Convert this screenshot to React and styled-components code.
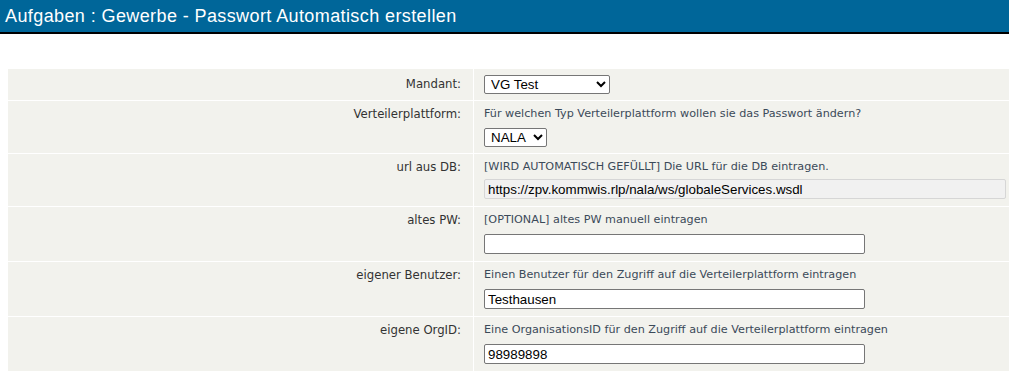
import React from "react";
import styled, { createGlobalStyle } from "styled-components";

const GlobalStyle = createGlobalStyle`
  html, body {
    margin: 0;
    padding: 0;
    background: #fff;
    overflow: hidden;
  }
  body {
    font-family: "DejaVu Sans", Verdana, sans-serif;
  }
`;

const Page = styled.div`
  width: 1009px;
  height: 372px;
  overflow: hidden;
`;

const TitleBar = styled.h1`
  margin: 0;
  height: 32px;
  background: #006699;
  border-bottom: 2px solid #000;
  color: #fff;
  font-family: "Liberation Sans", Arial, sans-serif;
  font-size: 18px;
  letter-spacing: 0.4px;
  font-weight: normal;
  line-height: 32px;
  padding-left: 5px;
  white-space: nowrap;
`;

const Form = styled.div`
  margin: 35px 0 0 8px;
  width: 1020px;
  display: grid;
  grid-template-columns: 465px 1fr;
  column-gap: 1px;
  row-gap: 1px;
  background: #fff;
`;

const Label = styled.div`
  background: #f2f2ed;
  color: #333;
  font-family: "DejaVu Sans", Verdana, sans-serif;
  font-size: 11.7px;
  line-height: 14px;
  text-align: right;
  padding: ${({ $single }) => ($single ? "8px" : "6px")} 12px 0 0;
`;

const Value = styled.div`
  background: #f2f2ed;
  padding: 6px 10px;
  display: flex;
  flex-direction: column;
  align-items: flex-start;
`;

const Hint = styled.div`
  color: #3b4a59;
  font-family: "DejaVu Sans", Verdana, sans-serif;
  font-size: 11.2px;
  line-height: 14px;
  margin-bottom: ${({ $gap }) => $gap || 7}px;
  white-space: nowrap;
`;

const Select = styled.select`
  box-sizing: border-box;
  width: ${({ $w }) => $w}px;
  height: 19px;
  padding: 0 0 0 2px;
  border: 1px solid #767676;
  border-radius: 2px;
  background: #fff;
  color: #000;
  font-family: "Liberation Sans", Arial, sans-serif;
  font-size: 13.33px;
`;

const Input = styled.input`
  box-sizing: border-box;
  width: ${({ $wide }) => ($wide ? "522px" : "381px")};
  height: 20px;
  margin-bottom: 1px;
  padding: 0 3px;
  border: 1px solid ${({ readOnly }) => (readOnly ? "#d6d6d6" : "#767676")};
  border-radius: 2px;
  background: ${({ readOnly }) => (readOnly ? "#f1f1f1" : "#fff")};
  color: #000;
  font-family: "Liberation Sans", Arial, sans-serif;
  font-size: 13.33px;
  outline: none;
`;

export default function App() {
  return (
    <Page>
      <GlobalStyle />
      <TitleBar>Aufgaben : Gewerbe - Passwort Automatisch erstellen</TitleBar>
      <Form>
        <Label $single>Mandant:</Label>
        <Value>
          <Select $w={126} defaultValue="vg">
            <option value="vg">VG Test</option>
          </Select>
        </Value>

        <Label>Verteilerplattform:</Label>
        <Value>
          <Hint>Für welchen Typ Verteilerplattform wollen sie das Passwort ändern?</Hint>
          <Select $w={63} defaultValue="nala">
            <option value="nala">NALA</option>
          </Select>
        </Value>

        <Label>url aus DB:</Label>
        <Value>
          <Hint $gap={5}>[WIRD AUTOMATISCH GEFÜLLT] Die URL für die DB eintragen.</Hint>
          <Input $wide readOnly defaultValue="https://zpv.kommwis.rlp/nala/ws/globaleServices.wsdl" />
        </Value>

        <Label>altes PW:</Label>
        <Value>
          <Hint>[OPTIONAL] altes PW manuell eintragen</Hint>
          <Input defaultValue="" />
        </Value>

        <Label>eigener Benutzer:</Label>
        <Value>
          <Hint>Einen Benutzer für den Zugriff auf die Verteilerplattform eintragen</Hint>
          <Input defaultValue="Testhausen" />
        </Value>

        <Label>eigene OrgID:</Label>
        <Value>
          <Hint>Eine OrganisationsID für den Zugriff auf die Verteilerplattform eintragen</Hint>
          <Input defaultValue="98989898" />
        </Value>
      </Form>
    </Page>
  );
}
